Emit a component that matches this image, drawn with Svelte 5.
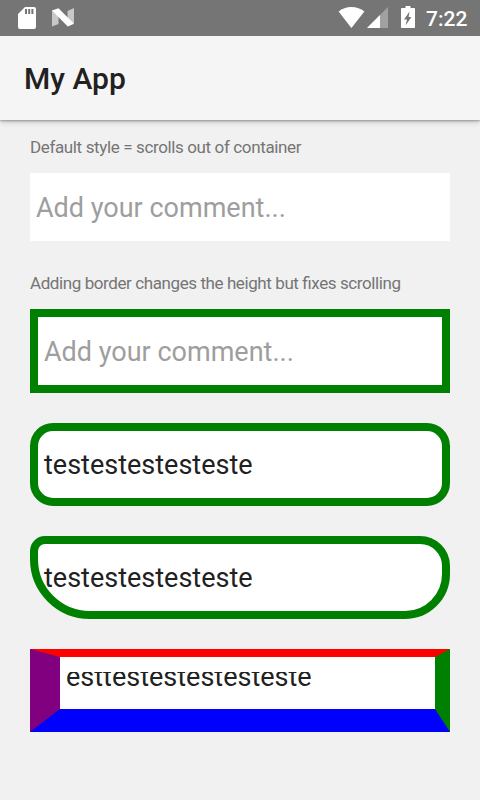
<script>
  const label1 = 'Default style = scrolls out of container';
  const label2 = 'Adding border changes the height but fixes scrolling';
</script>

<div class="screen">
  <div class="status">
    <svg class="sd" width="18" height="22" viewBox="0 0 18 22">
      <path fill="#fff" fill-rule="evenodd" d="M7 0H16Q18 0 18 2V20Q18 22 16 22H2Q0 22 0 20V7ZM7 2V7H9V2ZM10.2 2V7H12.2V2ZM13.4 2V7H15.4V2Z" />
    </svg>
    <svg class="nougat" width="22" height="19" viewBox="0 0 22 19">
      <path fill="#c8c8c8" d="M0 2L6.5 5V16L0 18.5ZM15.5 3L22 0V15.5L15.5 13Z" />
      <path fill="#fff" d="M0 2.5L6.5 0.3L22 15.8L15.8 18.5Z" />
    </svg>
    <span class="space"></span>
    <svg class="wifi" width="27" height="21" viewBox="0 0 27 21">
      <path fill="#fff" d="M0.6 4.6Q6 0 13.4 0T26.4 4.6L13.4 21Z" />
    </svg>
    <svg class="signal" width="21" height="21" viewBox="0 0 21 21">
      <path fill="#a1a1a1" d="M21 0V21H0Z" />
      <path fill="#fff" d="M13 8V21H0Z" />
    </svg>
    <svg class="battery" width="14" height="22" viewBox="0 0 14 22">
      <path fill="#fff" d="M4.5 0H9.5V2H13.2Q14 2 14 2.8V21.2Q14 22 13.2 22H0.8Q0 22 0 21.2V2.8Q0 2 0.8 2H4.5Z" />
      <path fill="#757575" d="M8.6 5.5L3 13.5H6L4.6 19.5L10.4 11H7.6Z" />
    </svg>
    <span class="time">7:22</span>
  </div>
  <header>My App</header>
  <main>
    <p class="label one">{label1}</p>
    <div class="field plain hint"><span>Add your comment...</span></div>
    <p class="label two">{label2}</p>
    <div class="field square hint"><span>Add your comment...</span></div>
    <div class="field round"><span>testestestesteste</span></div>
    <div class="field corners"><span>testestestesteste</span></div>
    <div class="field sides"><div class="clip"><span>esttestestestesteste</span></div></div>
  </main>
</div>

<style>
  :global(body) {
    margin: 0;
  }
  .screen {
    width: 480px;
    height: 800px;
    overflow: hidden;
    background: #f1f1f1;
    font-family: Roboto, sans-serif;
    color: #212121;
  }
  .status {
    position: relative;
    z-index: 2;
    display: flex;
    align-items: flex-start;
    box-sizing: border-box;
    height: 36px;
    padding: 7px 12px 0 18px;
    background: #757575;
  }
  svg {
    display: block;
    flex: none;
  }
  .nougat {
    margin: 1px 0 0 16px;
  }
  .space {
    flex: 1;
  }
  .signal {
    margin-left: 2px;
  }
  .battery {
    margin: -1px 11px 0 13px;
  }
  .time {
    width: 42px;
    font-size: 21px;
    line-height: 24px;
    font-weight: 500;
    color: #fff;
    white-space: nowrap;
  }
  header {
    position: relative;
    box-sizing: border-box;
    height: 84px;
    padding-left: 24px;
    background: #f5f5f5;
    font-size: 30px;
    line-height: 86px;
    font-weight: 500;
    box-shadow: 0 1px 2px rgba(0, 0, 0, 0.3), 0 2px 6px rgba(0, 0, 0, 0.18);
  }
  main {
    padding: 17px 30px 0;
  }
  .label {
    margin: 0;
    font-size: 17px;
    line-height: 20px;
    letter-spacing: -0.37px;
    font-feature-settings: 'liga' 1;
    color: #757575;
    white-space: nowrap;
  }
  .two {
    margin-top: 32px;
    letter-spacing: -0.41px;
  }
  .field {
    display: flex;
    align-items: center;
    box-sizing: border-box;
    height: 83px;
    margin-top: 30px;
    padding-left: 6px;
    border: 8px solid #008000;
    background: #fff;
    font-size: 27px;
    line-height: 32px;
    white-space: nowrap;
  }
  .hint {
    padding-top: 2px;
    color: #9e9e9e;
  }
  .plain {
    height: 68px;
    margin-top: 16px;
    border: 0;
  }
  .square {
    height: 84px;
    margin-top: 16px;
  }
  .round {
    border-radius: 23px;
  }
  .corners {
    border-radius: 15px 30px 45px 60px;
  }
  .sides {
    align-items: flex-start;
    border-width: 8px 15px 23px 30px;
    border-color: #f00 #008000 #00f #800080;
  }
  .clip {
    display: flex;
    align-items: flex-end;
    height: 21px;
    margin-top: 15px;
    overflow: hidden;
  }
</style>
